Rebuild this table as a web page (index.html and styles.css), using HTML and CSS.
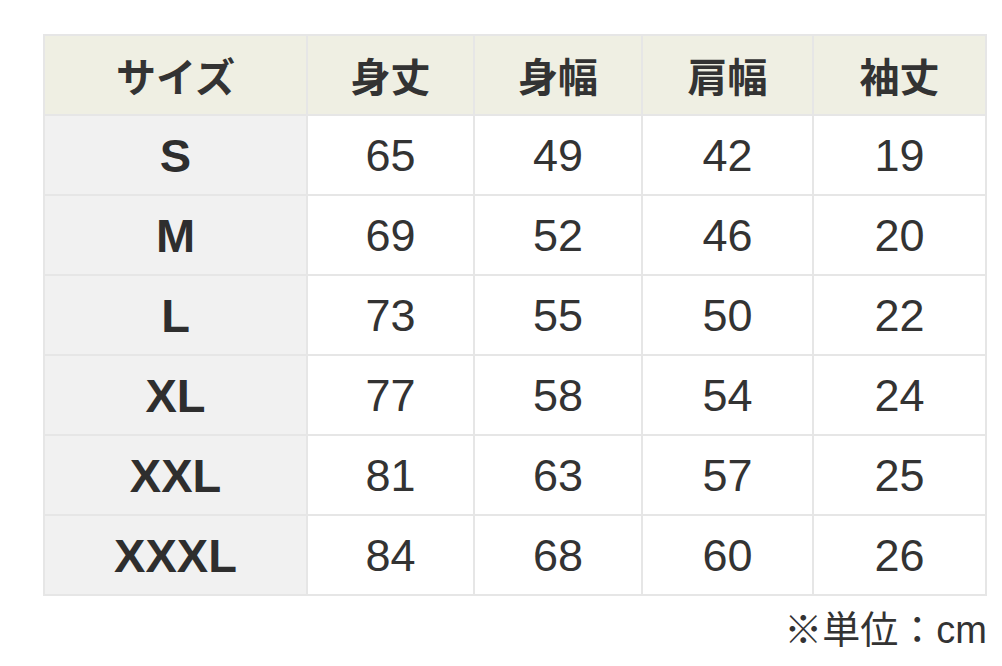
FILE: index.html
```html
<!DOCTYPE html>
<html lang="ja">
<head>
<meta charset="utf-8">
<title>サイズ表</title>
<link rel="stylesheet" href="styles.css">
</head>
<body>
<div class="wrap">
  <table class="size-table">
    <colgroup>
      <col class="c1"><col class="c2"><col class="c3"><col class="c4"><col class="c5">
    </colgroup>
    <thead>
      <tr><th>サイズ</th><th>身丈</th><th>身幅</th><th>肩幅</th><th>袖丈</th></tr>
    </thead>
    <tbody>
      <tr><th>S</th><td>65</td><td>49</td><td>42</td><td>19</td></tr>
      <tr><th>M</th><td>69</td><td>52</td><td>46</td><td>20</td></tr>
      <tr><th>L</th><td>73</td><td>55</td><td>50</td><td>22</td></tr>
      <tr><th>XL</th><td>77</td><td>58</td><td>54</td><td>24</td></tr>
      <tr><th>XXL</th><td>81</td><td>63</td><td>57</td><td>25</td></tr>
      <tr><th>XXXL</th><td>84</td><td>68</td><td>60</td><td>26</td></tr>
    </tbody>
  </table>
  <p class="note">※単位：cm</p>
</div>
</body>
</html>
```

FILE: styles.css
```css
html, body {
  margin: 0;
  padding: 0;
  background: #ffffff;
}
body {
  font-family: "Liberation Sans", "Noto Sans CJK JP", sans-serif;
  color: #333333;
}
.wrap {
  padding: 34px 0 0 43px;
  width: 944px;
}
.size-table {
  table-layout: fixed;
  width: 944px;
  border-collapse: separate;
  border-spacing: 2px;
  background: #e6e6e6;
}
.c1 { width: 261px; }
.c2 { width: 165px; }
.c3 { width: 166px; }
.c4 { width: 169px; }
.c5 { width: 171px; }
.size-table th,
.size-table td {
  height: 78px;
  padding: 0;
  text-align: center;
  vertical-align: middle;
  font-size: 45px;
  line-height: 1;
}
.size-table thead th {
  background: #efefe3;
  font-family: "Noto Sans CJK JP", sans-serif;
  font-weight: 700;
  font-size: 40px;
}
.size-table tbody th {
  background: #f1f1f1;
  font-weight: 700;
  font-size: 47px;
  color: #2e2e2e;
}
.size-table td {
  background: #ffffff;
  font-weight: 400;
}
.note {
  margin: 12px 0 0;
  text-align: right;
  font-size: 38px;
  line-height: 1.2;
  padding-right: 0;
}
```
